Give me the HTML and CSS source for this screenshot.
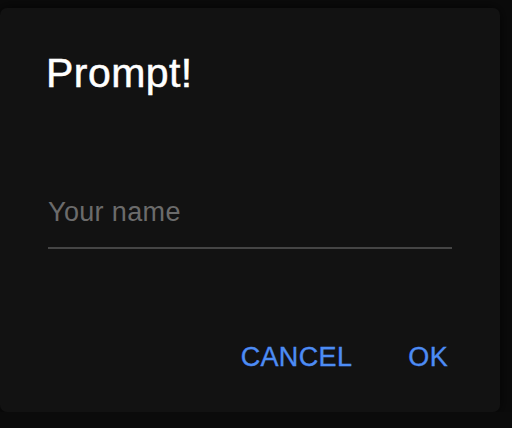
FILE: index.html
```html
<!DOCTYPE html>
<html>
<head>
<meta charset="utf-8">
<link rel="stylesheet" href="styles.css">
</head>
<body>
<div class="dialog">
  <h2 class="title">Prompt!</h2>
  <div class="content">
    <input class="field" type="text" placeholder="Your name">
  </div>
  <div class="actions">
    <button class="btn">CANCEL</button>
    <button class="btn">OK</button>
  </div>
</div>
</body>
</html>
```
FILE: styles.css
```css
html, body {
  margin: 0;
  padding: 0;
  background: #0b0b0b;
}
body {
  padding-top: 8px;
  font-family: "Liberation Sans", Arial, sans-serif;
}
.dialog {
  width: 500px;
  height: 404px;
  box-sizing: border-box;
  background: #121212;
  border-radius: 7px;
  box-shadow: 0 0 14px rgba(0, 0, 0, 0.7);
  padding: 41px 0 0 0;
  display: flex;
  flex-direction: column;
}
.title {
  margin: 0;
  padding: 0 48px 0 46px;
  font-size: 41px;
  line-height: 48px;
  letter-spacing: 0.45px;
  font-weight: normal;
  color: #ffffff;
  -webkit-text-stroke: 0.5px #ffffff;
}
.content {
  padding: 0 48px;
  margin-top: 95.6px;
}
.field {
  display: block;
  width: 100%;
  box-sizing: border-box;
  height: 56px;
  padding: 4px 0 18px;
  margin: 0;
  border: none;
  border-bottom: 2px solid #454545;
  background: transparent;
  font-family: "Liberation Sans", Arial, sans-serif;
  font-size: 27px;
  line-height: 32px;
  letter-spacing: 0.35px;
  color: #ffffff;
  outline: none;
}
.field::placeholder {
  color: #6b6b6b;
  opacity: 1;
}
.actions {
  display: flex;
  justify-content: flex-end;
  gap: 28px;
  padding: 0 38px 0 0;
  margin-top: 92.7px;
}
.btn {
  background: transparent;
  border: none;
  padding: 0 14px;
  margin: 0;
  font-family: "Liberation Sans", Arial, sans-serif;
  font-size: 27px;
  line-height: 32px;
  letter-spacing: 0.35px;
  color: #4d8cf5;
  -webkit-text-stroke: 0.35px #4d8cf5;
  cursor: pointer;
}
```
